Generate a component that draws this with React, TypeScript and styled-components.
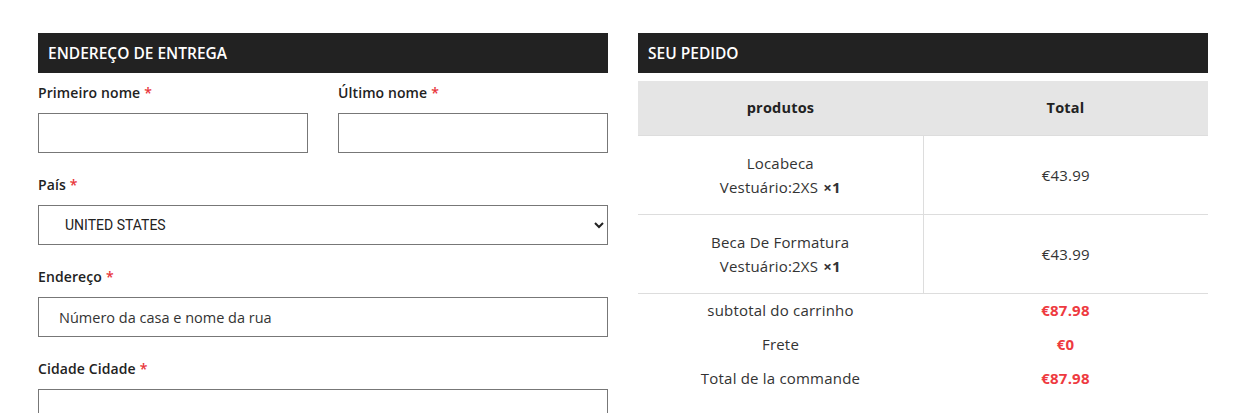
import React from "react";
import styled, { createGlobalStyle } from "styled-components";

const Global = createGlobalStyle`
  * { box-sizing: border-box; }
  body { margin: 0; background: #fff; font-family: "Open Sans", "Noto Sans", sans-serif; color: #222; }
`;

const Page = styled.div`
  display: grid;
  grid-template-columns: 570px 570px;
  column-gap: 30px;
  padding: 33px 0 0 38px;
`;

const Column = styled.section`
  display: flex;
  flex-direction: column;
`;

const SectionTitle = styled.h3`
  margin: 0;
  height: 40px;
  background: #222;
  color: #fff;
  font-size: 15.5px;
  font-weight: 600;
  line-height: 40px;
  padding: 0 10px;
  text-transform: uppercase;
`;

const Form = styled.div`
  display: flex;
  flex-direction: column;
  gap: 22px;
  padding-top: 10px;
`;

const Row = styled.div`
  display: grid;
  grid-template-columns: 1fr 1fr;
  column-gap: 30px;
`;

const Field = styled.label`
  display: flex;
  flex-direction: column;
  gap: 10px;
`;

const LabelText = styled.span`
  font-size: 14px;
  font-weight: 600;
  line-height: 20px;
  color: #222;
  letter-spacing: 0.1px;
`;

const Req = styled.span`
  color: #e8353b;
  margin-left: 4px;
`;

const Input = styled.input`
  height: 40px;
  width: 100%;
  border: 1px solid #777;
  border-radius: 0;
  padding: 0 20px;
  font-family: "Open Sans", sans-serif;
  font-size: 14.5px;
  color: #222;
  outline: none;
  &::placeholder { color: #333; }
`;

const Select = styled.select`
  height: 40px;
  width: 100%;
  border: 1px solid #777;
  border-radius: 0;
  padding: 0 0 0 22px;
  font-family: Roboto, sans-serif;
  font-size: 14px;
  color: #222;
  background: #fff;
`;

const Table = styled.table`
  margin-top: 8px;
  width: 100%;
  border-collapse: collapse;
  table-layout: fixed;
  font-size: 15px;
  letter-spacing: 0.2px;
`;

const Th = styled.th`
  background: #e5e5e5;
  height: 54px;
  font-size: 14.5px;
  font-weight: 700;
  color: #222;
  text-align: center;
  border-bottom: 1px solid #ddd;
`;

const Td = styled.td<{ $divider?: boolean }>`
  height: 79px;
  text-align: center;
  color: #333;
  border-bottom: 1px solid #ddd;
  border-right: ${(p) => (p.$divider ? "1px solid #ddd" : "none")};
  line-height: 24px;
  vertical-align: middle;
`;

const Qty = styled.strong`
  font-weight: 700;
  margin-left: 5px;
`;

const SumTd = styled.td<{ $value?: boolean }>`
  height: 34px;
  text-align: center;
  color: ${(p) => (p.$value ? "#ee3a40" : "#333")};
  font-weight: ${(p) => (p.$value ? 700 : 400)};
`;

const products = [
  { name: "Locabeca", variant: "Vestuário:2XS", qty: 1, price: "€43.99" },
  { name: "Beca De Formatura", variant: "Vestuário:2XS", qty: 1, price: "€43.99" },
];

const sums = [
  ["subtotal do carrinho", "€87.98"],
  ["Frete", "€0"],
  ["Total de la commande", "€87.98"],
];

export default function App() {
  return (
    <>
      <Global />
      <Page>
        <Column>
          <SectionTitle>Endereço de entrega</SectionTitle>
          <Form>
            <Row>
              <Field>
                <LabelText>
                  Primeiro nome<Req>*</Req>
                </LabelText>
                <Input />
              </Field>
              <Field>
                <LabelText>
                  Último nome<Req>*</Req>
                </LabelText>
                <Input />
              </Field>
            </Row>
            <Field>
              <LabelText>
                País<Req>*</Req>
              </LabelText>
              <Select defaultValue="US">
                <option value="US">UNITED STATES</option>
              </Select>
            </Field>
            <Field>
              <LabelText>
                Endereço<Req>*</Req>
              </LabelText>
              <Input placeholder="Número da casa e nome da rua" />
            </Field>
            <Field>
              <LabelText>
                Cidade Cidade<Req>*</Req>
              </LabelText>
              <Input />
            </Field>
          </Form>
        </Column>
        <Column>
          <SectionTitle>Seu pedido</SectionTitle>
          <Table>
            <thead>
              <tr>
                <Th>produtos</Th>
                <Th>Total</Th>
              </tr>
            </thead>
            <tbody>
              {products.map((p) => (
                <tr key={p.name}>
                  <Td $divider>
                    {p.name}
                    <br />
                    {p.variant}
                    <Qty>×{p.qty}</Qty>
                  </Td>
                  <Td>{p.price}</Td>
                </tr>
              ))}
              {sums.map(([k, v]) => (
                <tr key={k}>
                  <SumTd>{k}</SumTd>
                  <SumTd $value>{v}</SumTd>
                </tr>
              ))}
            </tbody>
          </Table>
        </Column>
      </Page>
    </>
  );
}
